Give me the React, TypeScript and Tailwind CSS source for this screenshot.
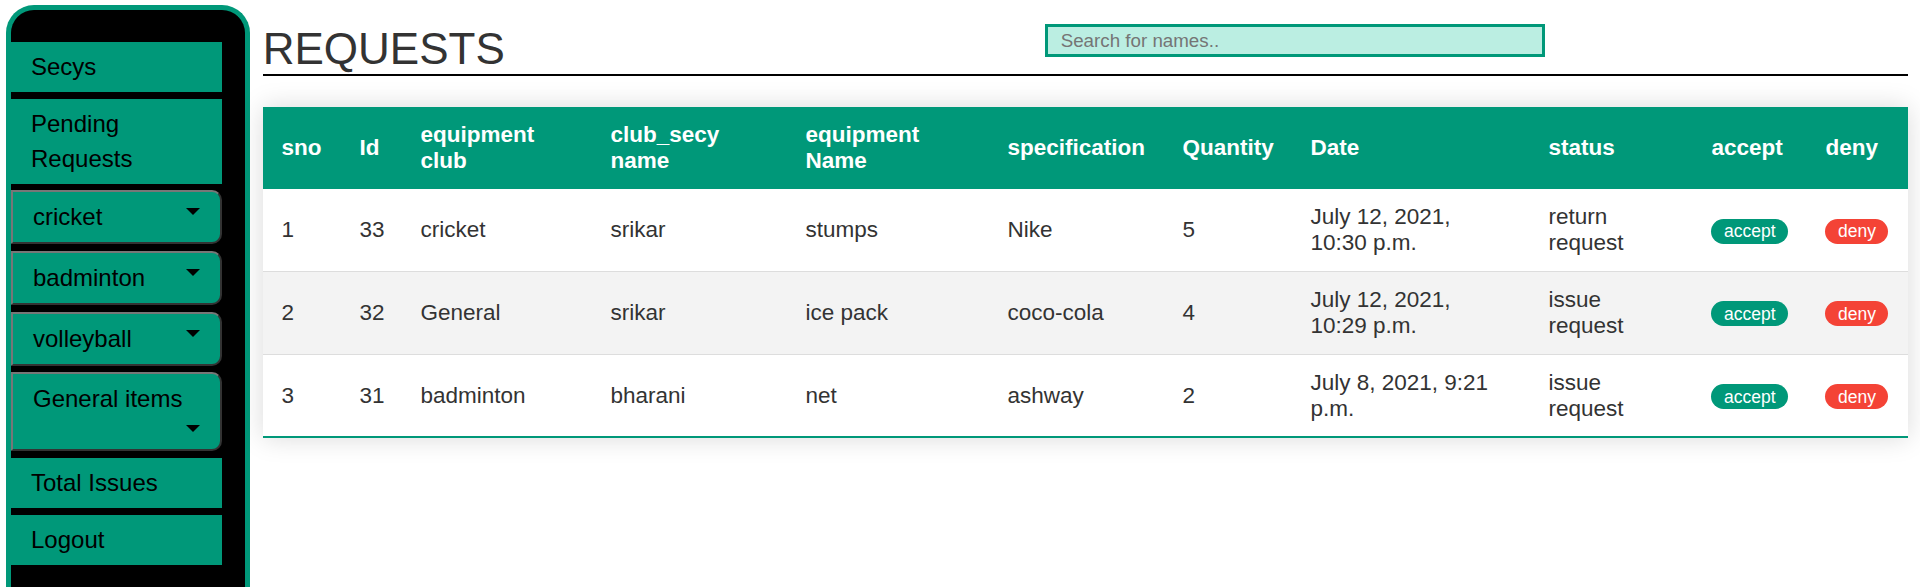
import React from 'react';

type RequestRow = {
  sno: number;
  id: number;
  club: string;
  secy: string;
  name: string;
  spec: string;
  qty: number;
  date: string;
  status: string;
};

const rows: RequestRow[] = [
  { sno: 1, id: 33, club: 'cricket', secy: 'srikar', name: 'stumps', spec: 'Nike', qty: 5, date: 'July 12, 2021, 10:30 p.m.', status: 'return request' },
  { sno: 2, id: 32, club: 'General', secy: 'srikar', name: 'ice pack', spec: 'coco-cola', qty: 4, date: 'July 12, 2021, 10:29 p.m.', status: 'issue request' },
  { sno: 3, id: 31, club: 'badminton', secy: 'bharani', name: 'net', spec: 'ashway', qty: 2, date: 'July 8, 2021, 9:21 p.m.', status: 'issue request' },
];

const colWidths = [
  'w-[78px]',
  'w-[61px]',
  'w-[190px]',
  'w-[195px]',
  'w-[202px]',
  'w-[175px]',
  'w-[128px]',
  'w-[238px]',
  'w-[163px]',
  'w-[114px]',
  'w-[101px]',
];

const headers = ['sno', 'Id', 'equipment club', 'club_secy name', 'equipment Name', 'specification', 'Quantity', 'Date', 'status', 'accept', 'deny'];

const Caret: React.FC<{ className?: string }> = ({ className = '' }) => (
  <svg width="14" height="7" viewBox="0 0 14 7" className={`shrink-0 ${className}`}>
    <path d="M0 0 L14 0 L7 7 Z" fill="#000" />
  </svg>
);

const NavLink: React.FC<{ children: React.ReactNode }> = ({ children }) => (
  <div className="w-[211px] bg-[#009879] pl-[20px] pr-[10px] pt-[7px] pb-[8px] text-[24px] leading-[35px] text-black">{children}</div>
);

const Dropdown: React.FC<{ label: string; tall?: boolean }> = ({ label, tall }) => {
  const frame = 'w-[211px] rounded-r-[10px] border-2 border-[#777] border-r-[#333] border-b-[#333] bg-[#009879] pl-[20px] pr-[20.5px] pt-[11px] text-[24px] text-black';
  if (tall) {
    return (
      <div className={`${frame} flex h-[79px] flex-col`}>
        <span className="leading-[28px]">{label}</span>
        <Caret className="mt-[12px] self-end" />
      </div>
    );
  }
  return (
    <div className={`${frame} flex h-[54px] items-start justify-between`}>
      <span className="leading-[28px]">{label}</span>
      <Caret className="mt-[5px]" />
    </div>
  );
};

export default function App() {
  return (
    <div className="flex min-h-[587px] bg-white font-['Liberation_Sans',Arial,sans-serif]">
      <aside className="ml-[6px] mt-[5px] h-[582px] w-[244px] shrink-0 rounded-t-[28px] border-[5px] border-b-0 border-[#009879] bg-black pt-[32px]">
        <nav className="flex flex-col gap-[6.7px]">
          <NavLink>Secys</NavLink>
          <NavLink>
            Pending
            <br />
            Requests
          </NavLink>
          <Dropdown label="cricket" />
          <Dropdown label="badminton" />
          <Dropdown label="volleyball" />
          <Dropdown label="General items" tall />
          <NavLink>Total Issues</NavLink>
          <NavLink>Logout</NavLink>
        </nav>
      </aside>

      <main className="ml-[12.7px] w-[1645px] shrink-0 pt-[24px]">
        <div className="flex items-start border-b-2 border-black">
          <h1 className="w-[782px] shrink-0 text-[44px] leading-[50px] text-[#333]">REQUESTS</h1>
          <input
            type="text"
            placeholder="Search for names.."
            className="h-[33px] w-[500px] border-[3px] border-[#009879] bg-[#bbeee2] pl-[13px] text-[18.75px] text-[#333] outline-none placeholder:text-[#757575]"
          />
        </div>

        <table className="mt-[31px] w-[1645px] table-fixed border-collapse text-left text-[22.5px] shadow-[0_0_25px_rgba(0,0,0,0.15)]">
          <colgroup>
            {colWidths.map((w, i) => (
              <col key={i} className={w} />
            ))}
          </colgroup>
          <thead>
            <tr className="bg-[#009879] text-white">
              {headers.map((h) => (
                <th key={h} className="px-[18.75px] py-[15px] align-middle font-bold leading-[26px]">
                  {h}
                </th>
              ))}
            </tr>
          </thead>
          <tbody className="text-[#333]">
            {rows.map((r, i) => (
              <tr
                key={r.id}
                className={`${i % 2 === 1 ? 'bg-[#f3f3f3]' : 'bg-white'} ${i === rows.length - 1 ? 'border-b-[2.5px] border-[#009879]' : 'border-b border-[#dddddd]'}`}
              >
                <td className="px-[18.75px] py-[15px] align-middle">{r.sno}</td>
                <td className="px-[18.75px] py-[15px] align-middle">{r.id}</td>
                <td className="px-[18.75px] py-[15px] align-middle">{r.club}</td>
                <td className="px-[18.75px] py-[15px] align-middle">{r.secy}</td>
                <td className="px-[18.75px] py-[15px] align-middle">{r.name}</td>
                <td className="px-[18.75px] py-[15px] align-middle">{r.spec}</td>
                <td className="px-[18.75px] py-[15px] align-middle">{r.qty}</td>
                <td className="px-[18.75px] py-[15px] align-middle leading-[25.9px]">{r.date}</td>
                <td className="px-[18.75px] py-[15px] align-middle leading-[25.9px]">{r.status}</td>
                <td className="px-[18.75px] py-[15px] align-middle">
                  <span className="inline-block rounded-full bg-[#009879] px-[12.5px] py-[2.5px] text-[17.5px] leading-[20px] text-white">accept</span>
                </td>
                <td className="px-[18.75px] py-[15px] align-middle">
                  <span className="inline-block rounded-full bg-[#f44336] px-[12.5px] py-[2.5px] text-[17.5px] leading-[20px] text-white">deny</span>
                </td>
              </tr>
            ))}
          </tbody>
        </table>
      </main>
    </div>
  );
}
